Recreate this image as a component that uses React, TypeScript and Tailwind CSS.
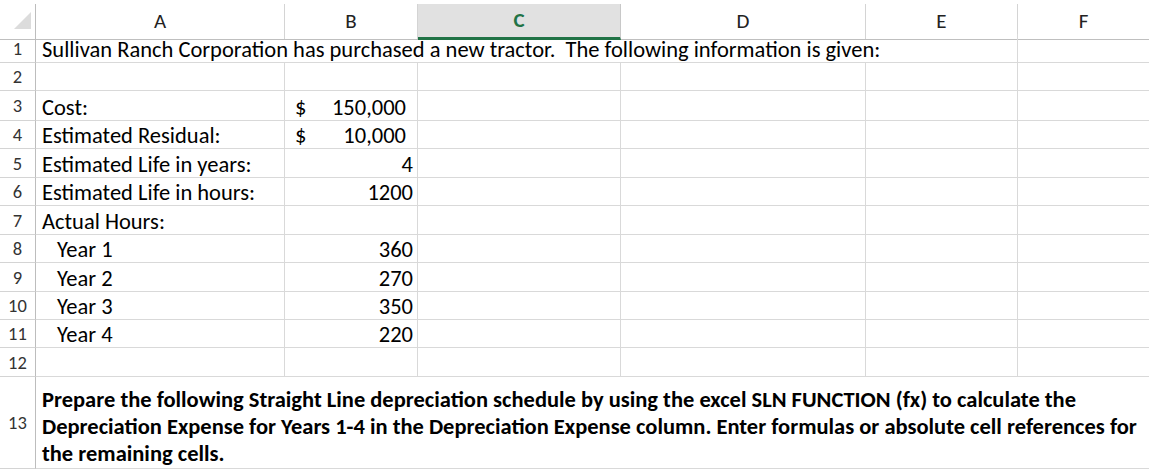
import React from "react";

const GRID = "grid grid-cols-[36px_249px_133px_203px_245px_152px_131px]";
const FONT = "font-['Carlito','Lato',sans-serif]";

function RowHead({ n }: { n: number | string }) {
  return (
    <div className="flex items-center justify-center border-r border-b border-r-[#bdbdbd] border-b-[#d4d4d4] text-[18.5px] text-[#333] leading-none pt-[2px]">
      {n}
    </div>
  );
}

function Cell({
  children,
  className = "",
}: {
  children?: React.ReactNode;
  className?: string;
}) {
  return (
    <div
      className={`flex items-end border-r border-b border-[#d9d9d9] text-[22.5px] leading-[25px] text-black whitespace-nowrap overflow-visible ${className}`}
    >
      {children}
    </div>
  );
}

function LastCell({ children }: { children?: React.ReactNode }) {
  return (
    <div className="flex items-end border-b border-[#d9d9d9] text-[22.5px] leading-[25px]">
      {children}
    </div>
  );
}

type RowData = {
  h: string;
  a?: string;
  indent?: boolean;
  b?: string;
  acct?: boolean;
};

const rows: RowData[] = [
  { h: "h-[28px]" },
  { h: "h-[30px]", a: "Cost:", b: "150,000", acct: true },
  { h: "h-[28px]", a: "Estimated Residual:", b: "10,000", acct: true },
  { h: "h-[29px]", a: "Estimated Life in years:", b: "4" },
  { h: "h-[28px]", a: "Estimated Life in hours:", b: "1200" },
  { h: "h-[29px]", a: "Actual Hours:" },
  { h: "h-[28px]", a: "Year 1", indent: true, b: "360" },
  { h: "h-[29px]", a: "Year 2", indent: true, b: "270" },
  { h: "h-[28px]", a: "Year 3", indent: true, b: "350" },
  { h: "h-[28px]", a: "Year 4", indent: true, b: "220" },
  { h: "h-[29px]" },
];

export default function App() {
  return (
    <div className={`w-[1149px] h-[469px] overflow-hidden bg-white ${FONT}`}>
      {/* Column header */}
      <div className={`${GRID} h-[34px]`}>
        <div className="pt-[4px] border-b border-[#bfbfbf]">
          <div className="h-full border-r border-[#bdbdbd] relative">
            <svg
              width="36"
              height="30"
              viewBox="0 0 36 30"
              className="absolute left-0 top-0"
            >
              <polygon points="31,8 31,25 14,25" fill="#dcdcdc" />
            </svg>
          </div>
        </div>
        {["A", "B", "C", "D", "E", "F"].map((l) =>
          l === "C" ? (
            <div key={l} className="pt-[4px]">
              <div className="h-full bg-[#e1e1e1] border-b-[3px] border-b-[#217346] border-r border-r-[#c8c8c8] flex items-center justify-center text-[21px] font-bold text-[#217346] pt-[1px]">
                {l}
              </div>
            </div>
          ) : (
            <div key={l} className="pt-[4px] border-b border-[#bfbfbf]">
              <div
                className={`h-full flex items-center justify-center text-[21px] text-[#222] pt-[1px] ${
                  l === "F" ? "" : "border-r border-[#d4d4d4]"
                }`}
              >
                {l}
              </div>
            </div>
          )
        )}
      </div>

      {/* Row 1 */}
      <div className={`${GRID} h-[29px]`}>
        <RowHead n={1} />
        <Cell className="col-span-5 pl-[6px]">
          Sullivan Ranch Corporation has purchased a new tractor.&nbsp; The
          following information is given:
        </Cell>
        <LastCell />
      </div>

      {rows.map((r, i) => (
        <div key={i} className={`${GRID} ${r.h}`}>
          <RowHead n={i + 2} />
          <Cell className={r.indent ? "pl-[21px]" : "pl-[6px]"}>{r.a}</Cell>
          {r.acct ? (
            <Cell className="justify-between pl-[10px] pr-[11px]">
              <span>$</span>
              <span>{r.b}</span>
            </Cell>
          ) : (
            <Cell className="justify-end pr-[4px]">{r.b}</Cell>
          )}
          <Cell />
          <Cell />
          <Cell />
          <LastCell />
        </div>
      ))}

      {/* Row 13 */}
      <div className={`${GRID} h-[92px]`}>
        <RowHead n={13} />
        <div className="col-span-6 border-b border-[#d9d9d9] flex flex-col justify-end pl-[6px] pb-[1px] text-[22.5px] leading-[27px] font-bold text-black whitespace-nowrap">
          <div>
            Prepare the following Straight Line depreciation schedule by using
            the excel SLN FUNCTION (fx) to calculate the
          </div>
          <div>
            Depreciation Expense for Years 1-4 in the Depreciation Expense
            column. Enter formulas or absolute cell references for
          </div>
          <div>the remaining cells.</div>
        </div>
      </div>
    </div>
  );
}
